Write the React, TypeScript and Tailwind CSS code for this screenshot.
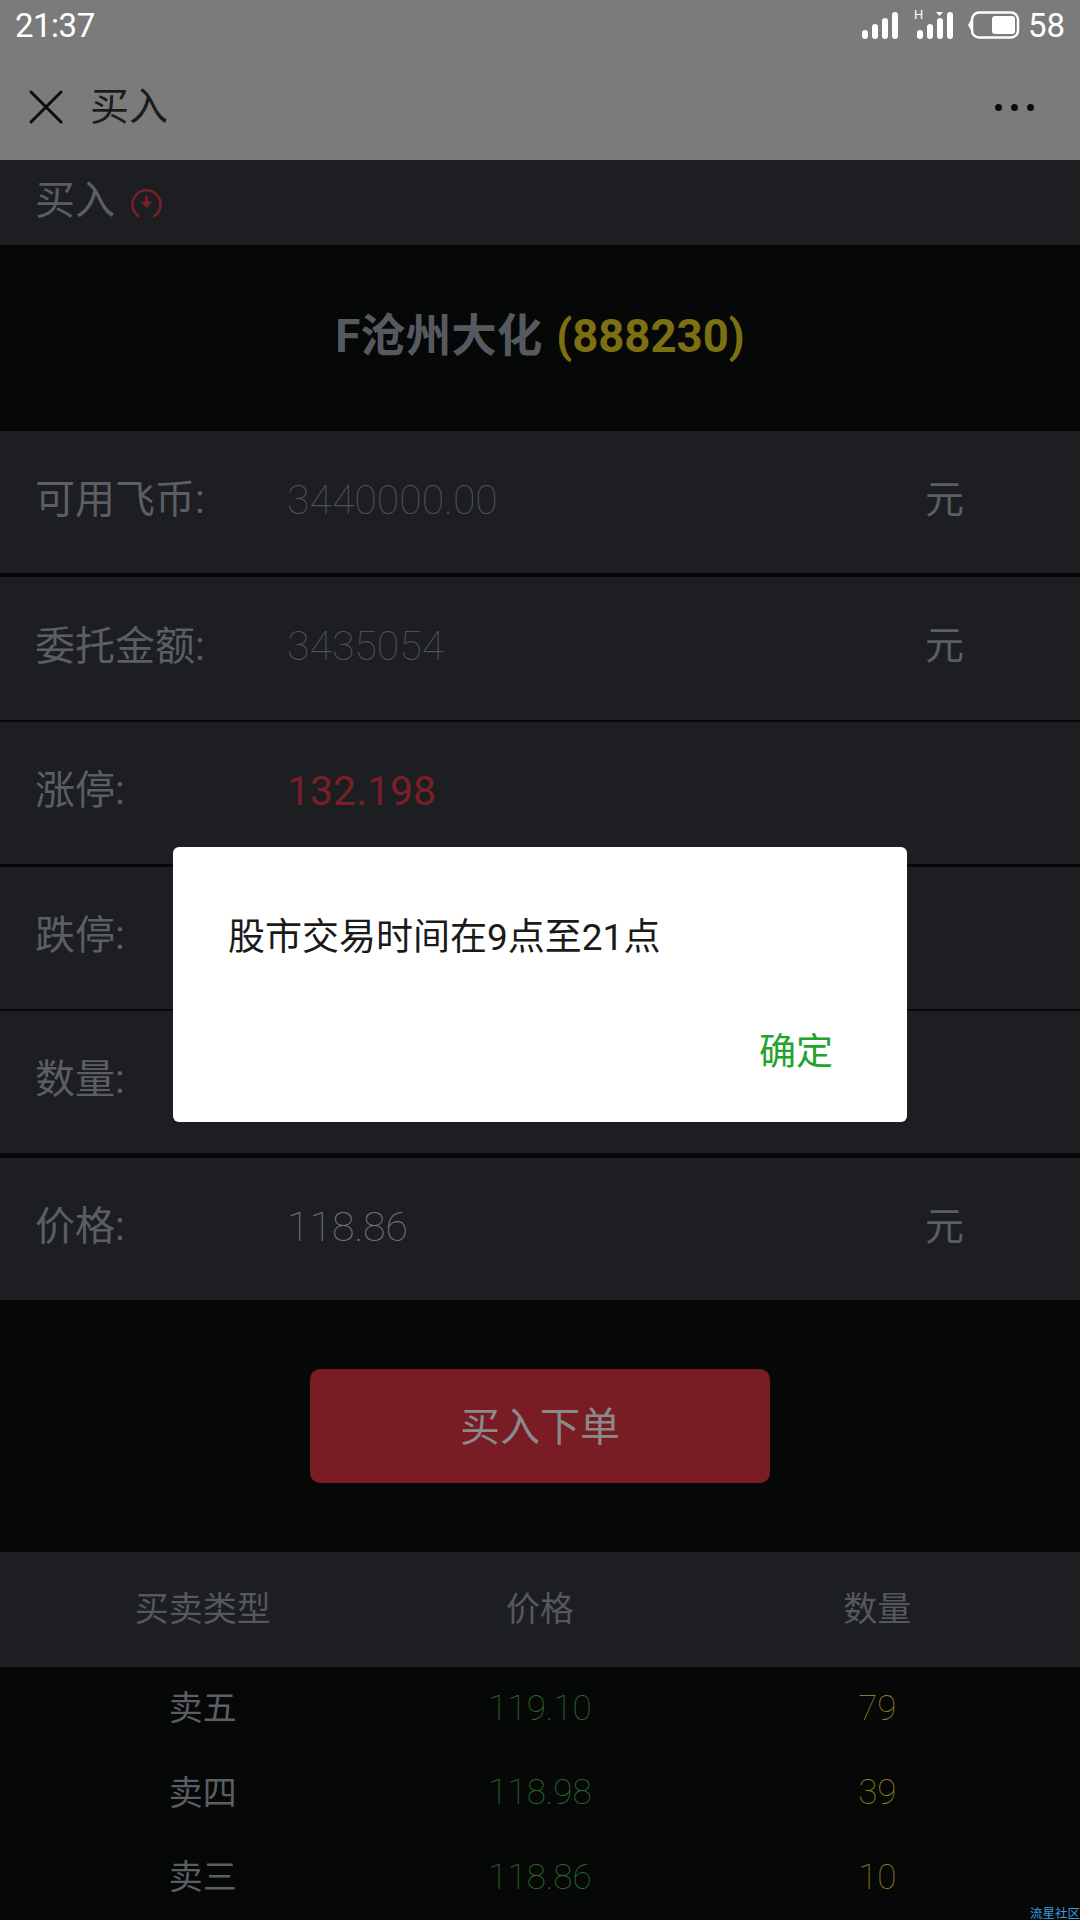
const rows = [
  { label: '可用飞币:', value: '3440000.00', cls: 'text-[41px] font-thin text-[#4e5156]', unit: '元', h: 'h-[142px] mb-[4px]' },
  { label: '委托金额:', value: '3435054', cls: 'text-[41px] font-thin text-[#4e5156]', unit: '元', h: 'h-[143px] mb-[2px]' },
  { label: '涨停:', value: '132.198', cls: 'text-[41px] font-normal text-[#7a1f28]', unit: '', h: 'h-[142px] mb-[3px]' },
  { label: '跌停:', value: '', cls: '', unit: '', h: 'h-[142px] mb-[2px]' },
  { label: '数量:', value: '', cls: '', unit: '', h: 'h-[142px] mb-[5px]' },
  { label: '价格:', value: '118.86', cls: 'text-[41px] font-thin text-[#717274]', unit: '元', h: 'h-[142px]' },
];

const quotes = [
  { type: '卖五', price: '119.10', qty: '79' },
  { type: '卖四', price: '118.98', qty: '39' },
  { type: '卖三', price: '118.86', qty: '10' },
];

function SignalBars({ h }: { h?: boolean }) {
  return (
    <svg width="38" height="28" viewBox="0 0 38 28" fill="#fff">
      <rect x="2" y="19" width="6" height="9" rx="3" />
      <rect x="12" y="13" width="6" height="15" rx="3" />
      {h && <path d="M21 1h7l-3.500 4z" />}
      <rect x="22" y="7" width="6" height="21" rx="3" />
      <rect x="32" y="1" width="6" height="27" rx="3" />
    </svg>
  );
}

export default function App() {
  return (
    <div className="relative h-[1920px] w-[1080px] overflow-hidden bg-[#060707] font-['Roboto','Noto_Sans_CJK_SC',sans-serif]">
      {/* status bar + title */}
      <div className="h-[160px] bg-[#7b7b7b]">
        <div className="flex h-[50px] items-center justify-between pl-[15px] pr-[15px]">
          <span className="text-[33px] leading-none tracking-[-0.5px] text-white">21:37</span>
          <div className="flex items-center">
            <SignalBars />
            <div className="relative ml-[17px]">
              <span className="absolute left-[-1px] top-[-3px] text-[13px] leading-none text-white">H</span>
              <SignalBars h />
            </div>
            <svg className="ml-[15px]" width="52" height="28" viewBox="0 0 52 28" fill="none">
              <path d="M0 14l3-5v10z" fill="#fff" />
              <rect x="4" y="1.500" width="46" height="25" rx="7" stroke="#fff" strokeWidth="2.500" />
              <rect x="24" y="5" width="23" height="18" rx="3" fill="#fff" />
            </svg>
            <span className="ml-[8px] text-[33px] leading-none text-white">58</span>
          </div>
        </div>
        <div className="flex h-[110px] items-center justify-between pt-[4px] pl-[29px] pr-[46px]">
          <div className="flex items-center">
            <svg width="34" height="34" viewBox="0 0 34 34" stroke="#0c0c0c" strokeWidth="3" strokeLinecap="round">
              <path d="M2 2l30 30M32 2L2 32" />
            </svg>
            <span className="ml-[27px] text-[39px] leading-none text-[#1b1b1b]">买入</span>
          </div>
          <div className="flex gap-[9px]">
            <span className="h-[7px] w-[7px] rounded-full bg-[#0c0c0c]" />
            <span className="h-[7px] w-[7px] rounded-full bg-[#0c0c0c]" />
            <span className="h-[7px] w-[7px] rounded-full bg-[#0c0c0c]" />
          </div>
        </div>
      </div>

      <div className="flex h-[85px] items-center bg-[#1c1e22] pb-[4px] pl-[35px]">
        <span className="text-[40px] leading-none text-[#5b5e63]">买入</span>
        <svg className="ml-[16px] mt-[4px]" width="31" height="33" viewBox="0 0 32 34" fill="none" stroke="#7a1f28">
          <path d="M8 31A14.500 14.500 0 1 1 24 31" strokeWidth="2.500" strokeLinecap="round" />
          <path d="M16 10v9" strokeWidth="3" />
          <path d="M10 16h12l-6 7z" fill="#7a1f28" stroke="none" />
        </svg>
      </div>

      <div className="flex h-[186px] items-center justify-center pb-[2px] text-[45.500px] font-bold leading-none">
        <span className="text-[#565a60]">F沧州大化</span>
        <span className="ml-[14px] text-[#7d7013]">(888230)</span>
      </div>

      {rows.map((row) => (
        <div key={row.label} className={`flex items-center bg-[#1c1e22] pb-[4px] pl-[35px] ${row.h}`}>
          <span className="w-[252px] text-[40px] leading-none text-[#5b5e63]">{row.label}</span>
          <span className={`w-[638px] leading-none ${row.cls}`}>{row.value}</span>
          <span className="text-[39px] leading-none text-[#5b5e63]">{row.unit}</span>
        </div>
      ))}

      <div className="flex h-[252px] items-center justify-center">
        <div className="flex h-[114px] w-[460px] items-center justify-center rounded-[10px] bg-[#7a1c24] pt-[3px] text-[40px] text-[#8a8a8a]">
          买入下单
        </div>
      </div>

      <div className="grid h-[115px] grid-cols-3 items-center bg-[#1c1e22] px-[34px] pb-[2px] text-center text-[34px] leading-none text-[#55585d]">
        <span>买卖类型</span>
        <span>价格</span>
        <span>数量</span>
      </div>

      <div className="-mt-[1px]">
        {quotes.map((q) => (
          <div key={q.type} className="grid h-[84.500px] grid-cols-3 items-center px-[34px] text-center text-[34px] leading-none">
            <span className="text-[#5b5e63]">{q.type}</span>
            <span className="text-[35px] font-thin text-[#276a27]">{q.price}</span>
            <span className="text-[35px] font-thin text-[#8a7d20]">{q.qty}</span>
          </div>
        ))}
      </div>

      <span className="absolute bottom-0 right-0 text-[12.500px] leading-none text-[#3f9be0]">流星社区</span>

      {/* alert dialog */}
      <div className="absolute left-[173px] top-[847px] h-[275px] w-[734px] rounded-[6px] bg-white">
        <p className="pl-[55px] pt-[72px] text-[37px] leading-none text-[#1a1a1a]">股市交易时间在9点至21点</p>
        <span className="absolute bottom-[51px] right-[74px] text-[37px] leading-none text-[#22a32a]">确定</span>
      </div>
    </div>
  );
}
